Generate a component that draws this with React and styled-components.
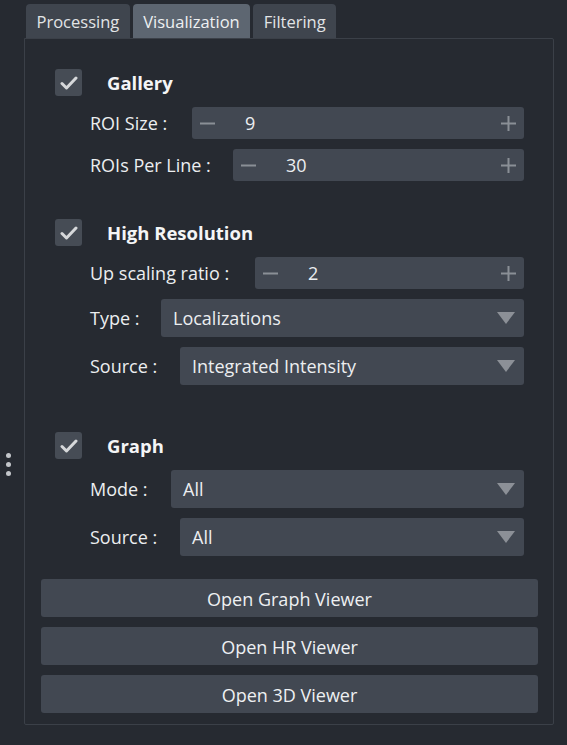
import React from 'react';
import styled, {createGlobalStyle} from 'styled-components';

const GlobalStyle = createGlobalStyle`
  html, body {
    margin: 0;
    padding: 0;
    background: #262a31;
  }
  body {
    font-family: "Open Sans", "Noto Sans", "Liberation Sans", sans-serif;
    color: #e6e8ea;
  }
`

const Page = styled.div`
  display: flex;
  width: 567px;
  height: 745px;
  background: #262a31;
`

const Handle = styled.div`
  width: 24px;
  display: flex;
  flex-direction: column;
  align-items: center;
  gap: 4px;
  padding-top: 453px;
  box-sizing: border-box;
  padding-right: 8px;
`

const Dot = styled.span`
  width: 5px;
  height: 5px;
  border-radius: 50%;
  background: #c3c6ca;
`

const Main = styled.div`
  width: 530px;
  display: flex;
  flex-direction: column;
  padding-top: 4px;
`

const TabBar = styled.div`
  display: flex;
  gap: 3px;
  padding-left: 2px;
  height: 34px;
`

const Tab = styled.div`
  display: flex;
  align-items: center;
  padding: 0 10.5px;
  border-radius: 4px 4px 0 0;
  font-size: 16.5px;
  color: ${p => p.active ? '#eef0f2' : '#e2e4e6'};
  background: ${p => p.active ? '#5d6671' : '#3f454e'};
`

const Panel = styled.div`
  border: 1px solid #3b4048;
  border-radius: 0 2px 2px 2px;
  padding: 30px 0 11px;
  display: flex;
  flex-direction: column;
`

const Section = styled.div`
  display: flex;
  flex-direction: column;
  gap: 10px;
  padding: 0 29px 0 30px;
  margin-bottom: ${p => p.after}px;
`

const Header = styled.div`
  display: flex;
  align-items: center;
  gap: 25px;
  margin-bottom: 1px;
`

const Check = styled.div`
  width: 27px;
  height: 27px;
  border-radius: 3px;
  background: #464c55;
  display: flex;
  align-items: center;
  justify-content: center;
`

const Title = styled.div`
  font-size: 18.5px;
  font-weight: 700;
  color: #f4f5f6;
`

const Row = styled.div`
  display: flex;
  align-items: center;
  padding-left: 35px;
`

const Label = styled.div`
  width: ${p => p.w}px;
  flex: none;
  font-size: 18px;
  color: #eceef0;
`

const Spin = styled.div`
  flex: 1;
  height: 32px;
  border-radius: 3px;
  background: #424852;
  display: flex;
  align-items: center;
  padding: 0 8px;
  font-size: 18px;
  color: #eceef0;
`

const SpinValue = styled.span`
  flex: 1;
  padding-left: 30px;
`

const Select = styled.div`
  flex: 1;
  height: 38px;
  border-radius: 3px;
  background: #424852;
  display: flex;
  align-items: center;
  justify-content: space-between;
  padding: 0 9px 0 12px;
  font-size: 18px;
  color: #eceef0;
`

const Arrow = styled.span`
  width: 0;
  height: 0;
  border-left: 9.5px solid transparent;
  border-right: 9.5px solid transparent;
  border-top: 12px solid #8c9097;
`

const Buttons = styled.div`
  display: flex;
  flex-direction: column;
  gap: 10px;
  padding: 0 15px 0 16px;
`

const Button = styled.div`
  height: 38px;
  box-sizing: border-box;
  padding-top: 2px;
  border-radius: 3px;
  background: #424852;
  display: flex;
  align-items: center;
  justify-content: center;
  font-size: 18px;
  color: #eef0f2;
`

const CheckMark = () => (
  <svg width="18" height="14" viewBox="0 0 18 14">
    <path d="M2 7.5 L6.5 12 L16 2" fill="none" stroke="#d6d8da" strokeWidth="3" strokeLinecap="round" strokeLinejoin="round" />
  </svg>
)

const Minus = () => (
  <svg width="15" height="15" viewBox="0 0 15 15">
    <rect x="0" y="6.5" width="15" height="2" fill="#8a8f96" />
  </svg>
)

const Plus = () => (
  <svg width="15" height="15" viewBox="0 0 15 15">
    <rect x="0" y="6.5" width="15" height="2" fill="#8a8f96" />
    <rect x="6.5" y="0" width="2" height="15" fill="#8a8f96" />
  </svg>
)

const SpinBox = ({value}) => (
  <Spin>
    <Minus />
    <SpinValue>{value}</SpinValue>
    <Plus />
  </Spin>
)

const Combo = ({value}) => (
  <Select>
    <span>{value}</span>
    <Arrow />
  </Select>
)

export default class App extends React.Component {
  render() {
    return (
      <Page>
        <GlobalStyle />
        <Handle>
          <Dot /><Dot /><Dot />
        </Handle>
        <Main>
          <TabBar>
            <Tab>Processing</Tab>
            <Tab active>Visualization</Tab>
            <Tab>Filtering</Tab>
          </TabBar>
          <Panel>
            <Section after={38}>
              <Header><Check><CheckMark /></Check><Title>Gallery</Title></Header>
              <Row><Label w={102}>ROI Size :</Label><SpinBox value="9" /></Row>
              <Row><Label w={143}>ROIs Per Line :</Label><SpinBox value="30" /></Row>
            </Section>
            <Section after={47}>
              <Header><Check><CheckMark /></Check><Title>High Resolution</Title></Header>
              <Row><Label w={165}>Up scaling ratio :</Label><SpinBox value="2" /></Row>
              <Row><Label w={71}>Type :</Label><Combo value="Localizations" /></Row>
              <Row><Label w={90}>Source :</Label><Combo value="Integrated Intensity" /></Row>
            </Section>
            <Section after={23}>
              <Header><Check><CheckMark /></Check><Title>Graph</Title></Header>
              <Row><Label w={81}>Mode :</Label><Combo value="All" /></Row>
              <Row><Label w={90}>Source :</Label><Combo value="All" /></Row>
            </Section>
            <Buttons>
              <Button>Open Graph Viewer</Button>
              <Button>Open HR Viewer</Button>
              <Button>Open 3D Viewer</Button>
            </Buttons>
          </Panel>
        </Main>
      </Page>
    );
  }
}
